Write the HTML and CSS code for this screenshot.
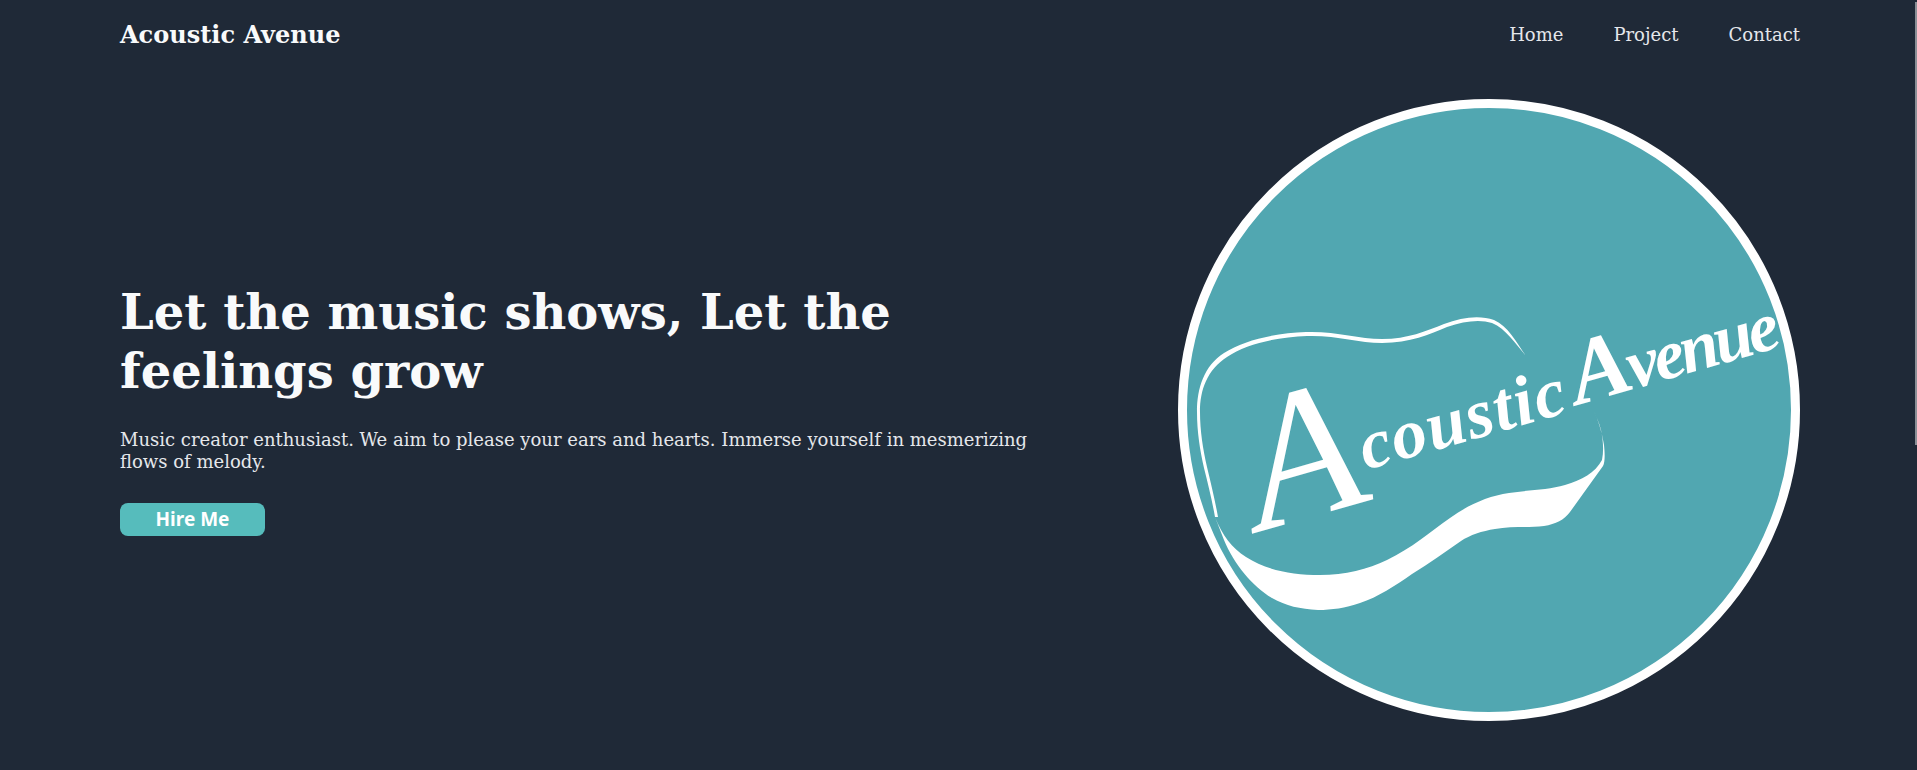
FILE: index.html
```html
<!DOCTYPE html>
<html lang="en">
<head>
    <meta charset="UTF-8">
    <meta name="viewport" content="width=device-width, initial-scale=1.0">
    <title>Acoustic Avenue</title>
    <link rel="stylesheet" href="styles.css">
</head>
<body>
    <div class="page">
        <header class="navbar">
            <a class="brand" href="#">Acoustic Avenue</a>
            <nav class="nav-links">
                <a href="#">Home</a>
                <a href="#">Project</a>
                <a href="#">Contact</a>
            </nav>
        </header>

        <section class="hero">
            <div class="hero-text">
                <h1>Let the music shows, Let the feelings grow</h1>
                <p>Music creator enthusiast. We aim to please your ears and hearts. Immerse yourself in mesmerizing flows of melody.</p>
                <a class="hire-btn" href="#">Hire Me</a>
            </div>

            <!-- viewBox uses page coordinates so the curves are easy to compare with the screenshot -->
            <svg class="logo" viewBox="1178 99 622 622" aria-label="Acoustic Avenue logo">
                <circle class="logo-disc" cx="1489" cy="410" r="306.500"/>
                <path class="logo-line" d="M1526 356 C1516 342 1508 326 1494 320 C1480 315 1462 317 1444 324 C1426 331 1408 339 1382 339 C1358 339 1336 331 1306 332 C1276 333 1244 340 1224 353 C1204 366 1197 388 1197 412 C1197 432 1200 450 1204 468 C1208 484 1212 500 1215 517 L1218 517 C1215 500 1211 484 1207 467 C1203 449 1200 431 1200 412 C1200 390 1207 370 1227 357 C1246 344 1277 337 1307 336 C1336 335 1358 343 1382 343 C1410 343 1430 334 1447 327 C1464 321 1480 319 1492 323 C1506 329 1515 343 1526 356 Z"/>
                <path class="logo-line" d="M1215 517 C1222 535 1232 548 1246 557 C1266 570 1292 575 1320 575 C1345 575 1368 569 1387 560 C1412 548 1430 532 1450 518 C1468 505 1488 496 1509 493 C1528 490 1548 490 1565 485 C1582 480 1595 473 1602 460 C1604 450 1603 440 1601 430 C1599 422 1596 416 1594 411 C1598 420 1602 432 1604 445 C1605 455 1605 462 1603 466 L1570 512 C1564 520 1556 524 1544 526 C1528 528 1510 526 1495 529 C1482 531 1470 535 1461 541 C1445 552 1430 563 1412 574 C1395 586 1378 597 1360 603 C1345 608 1332 610 1318 610 C1300 609 1286 606 1272 598 C1252 586 1234 564 1224 540 Z"/>
                <text class="script-cap" transform="translate(1262 531) rotate(-16)">A</text>
                <text class="script-word" transform="translate(1366 470) rotate(-16)" textLength="212" lengthAdjust="spacing">coustic</text>
                <text class="script-word" transform="translate(1578 405) rotate(-16)" textLength="214" lengthAdjust="spacing"><tspan class="script-mid">A</tspan>venue</text>
            </svg>
        </section>
    </div>
    <div class="scroll-thumb"></div>
</body>
</html>
```

FILE: styles.css
```css
html, body {
    height: 100%;
}
body {
    font-family: "DejaVu Serif", serif;
    background-color: #1f2937;
    color: #e5e7eb;
    margin: 0;
    padding: 0;
    overflow: hidden;
}
a {
    text-decoration: none;
    color: inherit;
}
.page {
    width: 1680px;
    margin-left: 120px;
}
.navbar {
    display: flex;
    justify-content: space-between;
    align-items: center;
    height: 69px;
}
.brand {
    font-size: 24px;
    font-weight: 700;
    color: #f9fafb;
}
.nav-links {
    display: flex;
    gap: 50px;
    font-size: 18px;
}
.hero {
    display: flex;
    justify-content: space-between;
    align-items: center;
    padding-top: 30px;
}
.hero-text {
    width: 940px;
    margin-top: -1px;
}
.hero-text h1 {
    margin: 0 0 28px;
    font-size: 48px;
    line-height: 59px;
    font-weight: 700;
    color: #f9fafb;
}
.hero-text p {
    margin: 0 0 30px;
    font-size: 18px;
    line-height: 22px;
}
.hire-btn {
    display: block;
    width: 145px;
    height: 33px;
    line-height: 33px;
    text-align: center;
    border-radius: 8px;
    background-color: #56bcbc;
    color: #fff;
    font-family: "Noto Sans", sans-serif;
    font-size: 19px;
    font-weight: 700;
}
.logo {
    display: block;
    width: 622px;
    height: 622px;
    flex-shrink: 0;
}
.logo-disc {
    fill: #51a7b1;
    stroke: #fff;
    stroke-width: 9;
}
.logo-line {
    fill: #fff;
}
.script-cap,
.script-word {
    fill: #fff;
    font-family: "Liberation Serif", serif;
    font-style: italic;
}
.script-cap {
    font-size: 190px;
}
.script-word {
    font-size: 70px;
    font-weight: 700;
}
.script-mid {
    font-size: 92px;
}
.scroll-thumb {
    position: absolute;
    top: 2px;
    right: 0;
    width: 2px;
    height: 443px;
    background-color: #8a8f96;
}
```
